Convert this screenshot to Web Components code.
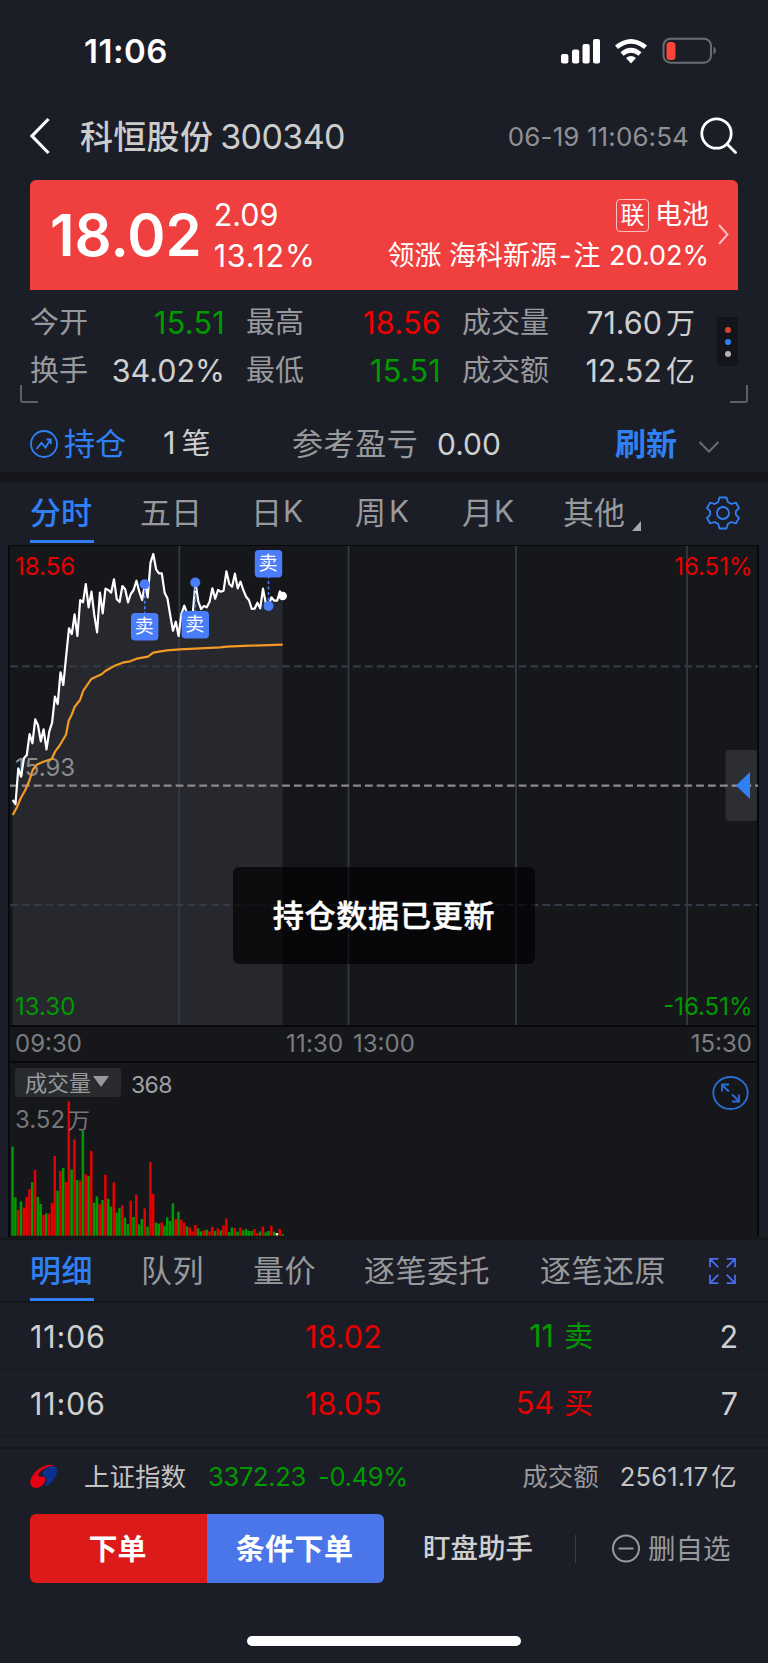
<!DOCTYPE html>
<html lang="zh-CN">
<head>
<meta charset="utf-8">
<title>科恒股份 300340</title>
<style>
  html, body { margin: 0; background: #1b1e26; }
  body {
    width: 768px;
    height: 1663px;
    overflow: hidden;
    font-family: Inter, "Noto Sans CJK SC", sans-serif;
    color: #ccc;
    --red: #e60000;
    --green: #009a00;
    --blue: #2f80f5;
    --muted: #98999c;
    --text: #cfcfcf;
    --band: #16171b;
  }
</style>
</head>
<body>
<stock-page></stock-page>

<script>
const define = (name, html, setup) => {
  customElements.define(name, class extends HTMLElement {
    constructor() {
      super();
      this.attachShadow({ mode: 'open' }).innerHTML = html;
    }
    connectedCallback() {
      if (setup) setup(this.shadowRoot, this);
    }
  });
};

define('status-bar', `
  <style>
    :host { display: flex; height: 102px; align-items: center; justify-content: space-between; padding: 0 52px 0 84px; color: #fff; box-sizing: border-box; }
    .time { font-size: 33px; font-weight: 600; letter-spacing: 0.5px; }
    svg { display: block; }
  </style>
  <span class="time">11:06</span>
  <svg width="156" height="28" viewBox="560 37 156 28">
    <g fill="#fff">
      <rect x="561" y="54" width="7.4" height="9.5" rx="2"/>
      <rect x="572" y="49.5" width="7.2" height="14" rx="2"/>
      <rect x="582.5" y="44" width="7.2" height="19.5" rx="2"/>
      <rect x="593" y="39" width="7" height="24.5" rx="2"/>
      <path d="M631 63.5l-5-5.500q5-4 10 0z"/>
    </g>
    <g fill="none" stroke="#fff" stroke-width="4.6">
      <path d="M616.500 47.300q14.500-12 29 0"/>
      <path d="M622 54q9-7.500 18 0"/>
    </g>
    <rect x="663.5" y="38.7" width="47.5" height="24" rx="7" fill="none" stroke="#6b6c72" stroke-width="2"/>
    <rect x="666.5" y="42" width="9" height="18" rx="3.5" fill="#ff453a"/>
    <path d="M713.500 46.500q2.500 1.500 2.500 4t-2.500 4z" fill="#6b6c72"/>
  </svg>
`);

define('nav-header', `
  <style>
    :host { display: flex; height: 68px; align-items: center; padding: 0 31px 0 29px; margin-bottom: 10px; }
    .name { font-size: 33px; margin-left: 30px; white-space: nowrap; font-weight: 500; letter-spacing: 0.3px; padding-bottom: 3px; }
    .name b { font-weight: 400; font-size: 34px; margin-left: 7px; letter-spacing: -0.6px; }
    .stamp { margin-left: auto; font-size: 26px; letter-spacing: 0.1px; color: #8f9094; margin-right: 10px; }
    svg { display: block; flex: none; }
  </style>
  <svg width="21" height="38" viewBox="0 0 21 38" fill="none" stroke="#fff" stroke-width="3.2"><path d="M19.500 2L3 19l16.500 17"/></svg>
  <span class="name">科恒股份<b>300340</b></span>
  <span class="stamp">06-19 11:06:54</span>
  <svg width="38" height="38" viewBox="0 0 38 38" fill="none" stroke="#fff" stroke-width="2.8" stroke-linecap="round"><circle cx="17.5" cy="16.5" r="14.7"/><path d="M28.500 27.500l8 8"/></svg>
`);

define('quote-banner', `
  <style>
    :host { display: flex; height: 109.5px; margin: 0 30px -0.5px; background: #ef3f3e; border-radius: 6px 6px 0 0; color: #fff; box-sizing: border-box; align-items: center; padding: 0 9px 0 20px; }
    .price { font-size: 58px; font-weight: 600; line-height: 109px; padding-top: 2px; }
    .diff { font-size: 30.5px; line-height: 41px; margin-left: 12px; }
    .diff :last-child { letter-spacing: 0.7px; }
    .right { margin-left: auto; text-align: right; font-size: 27px; line-height: 41px; white-space: nowrap; }
    .tag { display: inline-block; font-size: 24px; line-height: 31px; width: 31px; text-align: center; border: 1.5px solid #f9c0c0; border-radius: 4px; margin-right: 6px; }
    svg { margin-left: 9px; }
  </style>
  <span class="price">18.02</span>
  <div class="diff"><div>2.09</div><div>13.12%</div></div>
  <div class="right"><div><span class="tag">联</span>电池</div><div>领涨 海科新源<span style="margin:0 2px">-</span>注 <span style="margin-left:1px">20.02%</span></div></div>
  <svg width="11" height="21" viewBox="0 0 11 21" fill="none" stroke="#f9c0c0" stroke-width="2"><path d="M1 1l8.500 9.500L1 20"/></svg>
`);

define('quote-stats', `
  <style>
    :host { display: flex; position: relative; height: 113px; padding: 10px 30px 0; box-sizing: border-box; }
    .grid { display: grid; grid-template-columns: 195px 21px 195px 21px 233px; grid-template-rows: 48px 48px; width: 665px; }
    .cell { display: flex; justify-content: space-between; align-items: center; white-space: nowrap; font-size: 30.5px; color: var(--text); line-height: 40px; }
    .cell:nth-child(3n+2) { grid-column: 3; }
    .cell:nth-child(3n) { grid-column: 5; }
    label { font-size: 29px; color: var(--muted); padding-bottom: 1px; }
    .up { color: #f00000; } .down { color: var(--green); }
    .up, .down { letter-spacing: 0.3px; }
    .cell i { font-style: normal; font-size: 29px; margin-left: 4px; }
    .more { margin: 18px 0 0 22px; width: 21px; height: 49px; background: #14151a; border-radius: 3px; display: flex; flex-direction: column; align-items: center; justify-content: center; gap: 6px; }
    .more s { width: 6px; height: 6px; border-radius: 50%; }
    .corner { position: absolute; top: 96px; width: 16px; height: 16px; border-bottom: 2px solid #606165; }
    .l { left: 20px; border-left: 2px solid #606165; border-bottom-left-radius: 3px; }
    .r { right: 20px; border-right: 2px solid #606165; border-bottom-right-radius: 3px; }
  </style>
  <div class="grid">
    <div class="cell"><label>今开</label><span class="down">15.51</span></div>
    <div class="cell"><label>最高</label><span class="up">18.56</span></div>
    <div class="cell"><label>成交量</label><span>71.60<i>万</i></span></div>
    <div class="cell"><label>换手</label><span>34.02%</span></div>
    <div class="cell"><label>最低</label><span class="down">15.51</span></div>
    <div class="cell"><label>成交额</label><span>12.52<i>亿</i></span></div>
  </div>
  <div class="more"><s style="background:#d3452f"></s><s style="background:#2f80f5"></s><s style="background:#b5b5b5"></s></div>
  <span class="corner l"></span><span class="corner r"></span>
`);

define('position-bar', `
  <style>
    :host { display: grid; grid-template-columns: 34px 99px 129px 145px 178px 83px 1fr; align-items: center; height: 70px; padding: 14px 30px 0; box-sizing: border-box; font-size: 31px; color: var(--text); white-space: nowrap; }
    span { line-height: 40px; padding-bottom: 0.5px; }
    .blue { color: var(--blue); }
    .mute { color: var(--muted); letter-spacing: 0.6px; }
    svg { display: block; }
  </style>
  <svg width="28" height="30" viewBox="0 0 28 30" fill="none" stroke="#2f80f5" stroke-width="1.8"><circle cx="14" cy="15" r="13"/><path d="M6.500 20l5-6 4 4.500 5-8M16.500 10.500h4.300v4.500"/></svg>
  <span class="blue">持仓</span>
  <span>1<span style="margin-left:6px;font-size:29px">笔</span></span>
  <span class="mute">参考盈亏</span>
  <span style="font-size:30px">0.00</span>
  <span class="blue" style="font-weight:700">刷新</span>
  <svg width="22" height="12" viewBox="0 0 22 12" fill="none" stroke="#6c6d71" stroke-width="2" style="margin-top:5px"><path d="M1.500 1l9.500 9.500L20.500 1"/></svg>
`);

// Row of tabs; column widths come from --cols, the slotted item with .on is active
define('tab-strip', `
  <style>
    :host { display: grid; grid-template-columns: var(--cols); box-sizing: border-box; padding-left: 30px; font-size: 31px; color: #98999c; white-space: nowrap; }
    ::slotted(*) { display: flex; align-items: center; height: 100%; box-sizing: border-box; justify-self: start; border-bottom: 3.5px solid transparent; padding-bottom: 1.5px; }
    ::slotted(.on) { color: #2f80f5; font-weight: 500; border-color: #2f80f5; min-width: 64px; }
  </style>
  <slot></slot>
`);

// One value per minute from 09:30, in thirds of a pixel from the top of the plot
const PRICE = [780,792,685,710,655,645,582,610,538,556,604,568,628,574,548,470,492,397,435,350,265,282,223,288,180,187,132,202,155,225,277,158,220,146,150,158,118,178,186,138,148,187,162,150,122,155,180,133,172,68,42,88,100,100,158,175,225,272,245,288,222,197,220,228,222,127,185,207,198,202,185,145,176,150,155,152,94,132,140,101,145,125,150,170,180,207,206,188,205,146,190,198,172,182,182,154,167];
const AVERAGE = [[38,825],[50,803],[62,775],[76,750],[88,722],[98,690],[110,674],[130,665],[155,657],[165,635],[178,618],[198,584],[206,542],[216,522],[224,500],[240,480],[250,452],[274,417],[306,402],[316,393],[344,377],[372,367],[390,364],[410,356],[444,350],[460,338],[500,331],[540,328],[660,322],[680,320],[750,317],[848,314]];
const VOLUME = '267g 115g 77r 103g 85r 116r 140r 161g 197r 116g 95g 62r 67g 66r 98r 239r 135g 195r 203g 161r 403r 199g 289r 167g 165r 314g 184r 179g 254r 99g 118g 95r 107g 183r 111g 87g 160r 69g 83g 91r 54g 35g 105r 56g 123r 34g 50g 82r 27g 221r 125r 39g 36g 40r 30g 55g 44g 97g 50r 72g 48r 40r 28g 25r 13r 32r 22g 13g 16r 18g 13r 27r 14g 22r 16g 31r 52r 11g 24g 23r 12g 24r 16g 20g 14g 14g 20r 8r 13g 28r 10g 14g 30r 12g 8w 20r 5g'.split(' ');
const minuteX = i => 2.7 + i * 2.8125;

define('price-chart', `
  <style>
    :host { display: block; height: 479px; position: relative; }
    svg { display: block; font-size: 24px; }
    .toast { position: absolute; left: 223px; top: 321px; width: 302px; height: 97px; border-radius: 6px; background: rgba(0,0,0,.66); color: #fff; font-size: 31px; letter-spacing: .8px; font-weight: 500; -webkit-text-stroke: .5px #fff; display: flex; align-items: center; justify-content: center; padding-bottom: 4px; box-sizing: border-box; }
  </style>
  <svg width="748" height="479" viewBox="0 0 748 479"></svg>
  <div class="toast">持仓数据已更新</div>
`, root => {
  const pts = PRICE.map((y, i) => `${minuteX(i).toFixed(1)},${(y / 3 - 6).toFixed(1)}`).join(' ');
  const avg = AVERAGE.map(([x, y]) => `${(x / 3 - 10).toFixed(1)},${(y / 3 - 6).toFixed(1)}`).join(' ');
  const grid = [169.3, 338.5, 506, 677].map(x => `<path d="M${x} 0V479" stroke="#363845" stroke-width="1.8"/>`).join('');
  const dash = (y, c) => `<path d="M0 ${y}H748" stroke="${c}" stroke-width="2.2" stroke-dasharray="7.8 4.03"/>`;
  // sell markers: dot position and badge centre
  const sells = [[134.7, 38.3, 80.7], [185.3, 36.5, 78.7], [258.5, 60, 17.7]].map(([x, dot, box]) => `
    <path d="M${x} ${dot}V${box}" stroke="#4a7dfb" stroke-width="1.6" stroke-dasharray="3 2.5"/>
    <circle cx="${x}" cy="${dot}" r="5" fill="#4a7dfb"/>
    <rect x="${x - 13.7}" y="${box - 13.7}" width="27.4" height="27.4" rx="4" fill="#4a7dfb"/>
    <text x="${x - 0.5}" y="${box + 6.5}" fill="#fff" font-size="19" text-anchor="middle">卖</text>`).join('');
  root.querySelector('svg').innerHTML = `
    <polygon points="2.7,479 ${pts} 272.7,479" fill="#27282d"/>
    ${grid}
    ${dash(120.3, '#363845')}${dash(239.6, '#8a8a8d')}${dash(359, '#363845')}
    <text x="5" y="29" fill="#e60000">18.56</text>
    <text x="742.5" y="29" fill="#e60000" text-anchor="end">16.51%</text>
    <text x="5" y="230" fill="#8b8c8f">15.93</text>
    <text x="5" y="469" fill="#009a00">13.30</text>
    <text x="742.5" y="469" fill="#009a00" text-anchor="end">-16.51%</text>
    <polyline points="${avg}" fill="none" stroke="#f39a26" stroke-width="2.2" stroke-linejoin="round"/>
    <polyline points="${pts}" fill="none" stroke="#fff" stroke-width="2.2" stroke-linejoin="round"/>
    <circle cx="272.7" cy="50" r="4.3" fill="#fff"/>
    ${sells}
    <rect x="715.5" y="204" width="31.5" height="71" rx="3" fill="#fff" fill-opacity=".1"/>
    <path d="M726 239.500L740 226v27z" fill="#2f80f5"/>`;
});

define('time-axis', `
  <style>
    :host { display: grid; grid-template-columns: 271px 67px 1fr auto; align-items: center; height: 34px; padding: 0 5px; font-size: 24px; color: #7b7c80; border: solid #08090d; border-width: 2px 0; line-height: 32px; }
  </style>
  <span>09:30</span><span style="letter-spacing:.2px">11:30</span><span>13:00</span><span>15:30</span>
`);

define('volume-chart', `
  <style>
    :host { display: block; position: relative; height: 174px; }
    .bars { position: absolute; left: 0; top: 0; }
    .head { display: flex; align-items: flex-start; padding: 5px 8px 0 5px; position: relative; }
    .chip { width: 106px; height: 29px; box-sizing: border-box; padding: 0 10px 3px; background: #292b2f; border-radius: 4px; display: flex; align-items: center; gap: 2px; font-size: 22px; color: #98999c; white-space: nowrap; }
    .n { font-size: 23px; line-height: 28px; margin-left: 10px; color: #a0a1a4; padding-top: 3px; letter-spacing: -0.6px; }
    .zoom { margin: 7px 0 0 auto; display: block; }
    .peak { position: absolute; left: 5px; top: 41px; font-size: 24px; line-height: 32px; color: #75767a; }
    .peak i { font-style: normal; font-size: 22px; margin-left: 3px; }
  </style>
  <svg class="bars" width="280" height="174"></svg>
  <div class="head">
    <span class="chip">成交量<svg width="16" height="12" style="margin-top:2px"><path d="M0 0h16L8 11z" fill="#98999c"/></svg></span>
    <span class="n">368</span>
    <svg class="zoom" width="37" height="36" viewBox="0 0 37 36" fill="none" stroke="#2a6fd6" stroke-width="1.8"><ellipse cx="18.5" cy="18" rx="17.2" ry="16"/><path d="M17 16.500L10 10M10 16.500V9.500h7M20 19.500l7 6.500M27 19.500V26.500h-7"/></svg>
  </div>
  <span class="peak">3.52<i>万</i></span>
`, root => {
  const colors = { r: '#e60000', g: '#009a00', w: '#e8e8e8' };
  root.querySelector('.bars').innerHTML = VOLUME.map((v, i) => {
    const h = parseInt(v) / 3;
    const y = 172.7 - h;
    return `<rect x="${(minuteX(i) - 1.4).toFixed(2)}" y="${y.toFixed(1)}" width="2.5" height="${v.endsWith('w') ? 2.5 : h.toFixed(1)}" fill="${colors[v.slice(-1)]}"/>`;
  }).join('');
});

define('trade-row', `
  <style>
    :host { display: grid; grid-template-columns: 150px 201.500px 211.500px 145px; height: 66px; align-items: center; padding: 0 30px; font-size: 30.5px; line-height: 40px; color: var(--text); border-bottom: 1px solid #15171c; text-align: right; }
    span { padding-top: 1px; }
    .time { text-align: left; letter-spacing: 0.8px; }
    .price { color: var(--red); }
    :host([side="买"]) .deal { color: var(--red); }
    :host([side="卖"]) .deal { color: var(--green); }
    .deal i { font-style: normal; font-size: 29px; margin-left: 10px; }
  </style>
  <span class="time"></span><span class="price"></span><span class="deal"></span><span class="count"></span>
`, (root, el) => {
  root.querySelector('.time').textContent = el.getAttribute('time');
  root.querySelector('.price').textContent = el.getAttribute('price');
  root.querySelector('.deal').innerHTML = `${el.getAttribute('lots')}<i>${el.getAttribute('side')}</i>`;
  root.querySelector('.count').textContent = el.getAttribute('count');
});

define('index-ticker', `
  <style>
    :host { display: flex; height: 54px; margin-bottom: 2px; align-items: center; padding: 0 31px 0 30px; font-size: 25.5px; color: #c4c4c4; white-space: nowrap; line-height: 36px; }
    .down { color: var(--green); margin-left: 22px; letter-spacing: -0.3px; }
    svg { display: block; margin-right: 26px; }
    span { padding-top: 1px; }
    .amount { margin-left: 21px; letter-spacing: 0.2px; }
  </style>
  <svg width="28" height="25" viewBox="0 0 28 25"><path d="M24.500 1.500C17-2 2.500 6 0.300 17C-0.500 24.500 7 26 12 21.500C15.500 18.500 16.500 15 14.500 13C12 12 8 13.500 8.500 10.500C9 7 16 2.500 24.500 1.500z" fill="#e60012"/><path d="M16.500 4.500C20 1.500 25.500 1.200 27 4.500C28 9 25 14.500 22 17.500C19.500 20.500 16.500 22 14.500 22C16.500 19 17.500 15.500 15.500 13C14 11.500 12.500 12.500 12.500 9.500C12.800 7.500 14.500 5.800 16.500 4.500z" fill="#0b3190"/></svg>
  <span>上证指数</span>
  <span class="down">3372.23</span><span class="down" style="margin-left:12px">-0.49%</span>
  <span style="margin-left:auto;color:#98999c">成交额</span>
  <span class="amount">2561.17<span style="margin-left:3px">亿</span></span>
`);

define('action-bar', `
  <style>
    :host { display: flex; height: 69px; margin: 9px 30px 0; align-items: center; font-size: 27.5px; line-height: 36px; color: var(--text); white-space: nowrap; }
    button { width: 177px; height: 69px; border: 0; padding: 0 2px 4px 0; color: #fff; font: 700 29px Inter, "Noto Sans CJK SC", sans-serif; letter-spacing: 0; }
    .buy { background: #dc1a1a; border-radius: 6px 0 0 6px; }
    .cond { background: #4a76ea; border-radius: 0 6px 6px 0; letter-spacing: .4px; }
    .line { width: 1px; height: 28px; background: #3a3c47; margin: 0 36px 0 42px; }
    .del { color: #98999c; margin-left: 8px; }
  </style>
  <button class="buy">下单</button><button class="cond">条件下单</button>
  <span style="margin-left:39px;font-weight:500;padding-bottom:1px">盯盘助手</span>
  <span class="line"></span>
  <svg width="28" height="29" viewBox="0 0 28 29" fill="none" stroke="#98999c" stroke-width="2"><circle cx="14" cy="14.5" r="13"/><path d="M6.500 14.500h15"/></svg>
  <span class="del">删自选</span>
`);

define('stock-page', `
  <style>
    :host { display: flex; flex-direction: column; height: 1663px; }
    .band { height: 10px; background: var(--band); }
    .panel { margin: 0 9px 0 8px; border: solid #08090d; border-width: 1px 2px 0; background: #15171b; height: 691px; }
    .rule { height: 1px; background: #15171c; }
    .home { width: 274px; height: 10px; border-radius: 5px; background: #fff; margin: 53px auto 0; }
    .period { height: 61px; margin-bottom: 2px; --cols: 110px 111px 104px 107px 101px 112px 1fr; }
    .detail { height: 61px; --cols: 111px 112px 111px 176px 168px 1fr; letter-spacing: 0.5px; }
    .k { margin-left: 1px; padding-top: 2px; font-size: 30px; }
  </style>
  <status-bar></status-bar>
  <nav-header></nav-header>
  <quote-banner></quote-banner>
  <quote-stats></quote-stats>
  <position-bar></position-bar>
  <div class="band"></div>
  <tab-strip class="period">
    <span class="on">分时</span><span>五日</span><span>日<span class="k">K</span></span><span>周<span class="k" style="margin-left:3px">K</span></span><span>月<span class="k">K</span></span>
    <span>其他<svg width="9" height="10" style="margin:32px 0 0 7px"><path d="M9 0v10H0z" fill="#a8a8aa"/></svg></span>
    <span style="padding:4px 0 0 31px"><svg width="34" height="34" viewBox="-17 -17 34 34" fill="none" stroke="#2f80f5" stroke-width="1.8" stroke-linejoin="round"><path d="M-3.500-15.500h7l1.300 4.500 3.500 2 4.700-1.300 3 5.300-3.200 3.300v3.400l3.200 3.300-3 5.300-4.700-1.300-3.500 2-1.300 4.500h-7l-1.300-4.500-3.500-2-4.700 1.300-3-5.300 3.200-3.300v-3.400l-3.200-3.300 3-5.300 4.700 1.300 3.500-2z"/><circle r="6"/></svg></span>
  </tab-strip>
  <div class="panel">
    <price-chart></price-chart>
    <time-axis></time-axis>
    <volume-chart></volume-chart>
  </div>
  <div class="band" style="height:3px"></div>
  <tab-strip class="detail">
    <span class="on">明细</span><span>队列</span><span>量价</span><span>逐笔委托</span><span>逐笔还原</span>
    <svg width="29" height="61" viewBox="0 -19.500 29 61" fill="none" stroke="#4a6cf0" stroke-width="1.9"><path d="M1 10V1h9M1 1l9 9M19 1h9v9M28 1l-9 9M1 18v9h9M1 27l9-9M19 27h9v-9M28 27l-9-9"/></svg>
  </tab-strip>
  <div class="rule" style="height:2px"></div>
  <trade-row time="11:06" price="18.02" lots="11" side="卖" count="2"></trade-row>
  <trade-row time="11:06" price="18.05" lots="54" side="买" count="7"></trade-row>
  <div class="rule" style="margin-top:10px;height:2px"></div>
  <index-ticker></index-ticker>
  <action-bar></action-bar>
  <div class="home"></div>
`);
</script>
</body>
</html>
